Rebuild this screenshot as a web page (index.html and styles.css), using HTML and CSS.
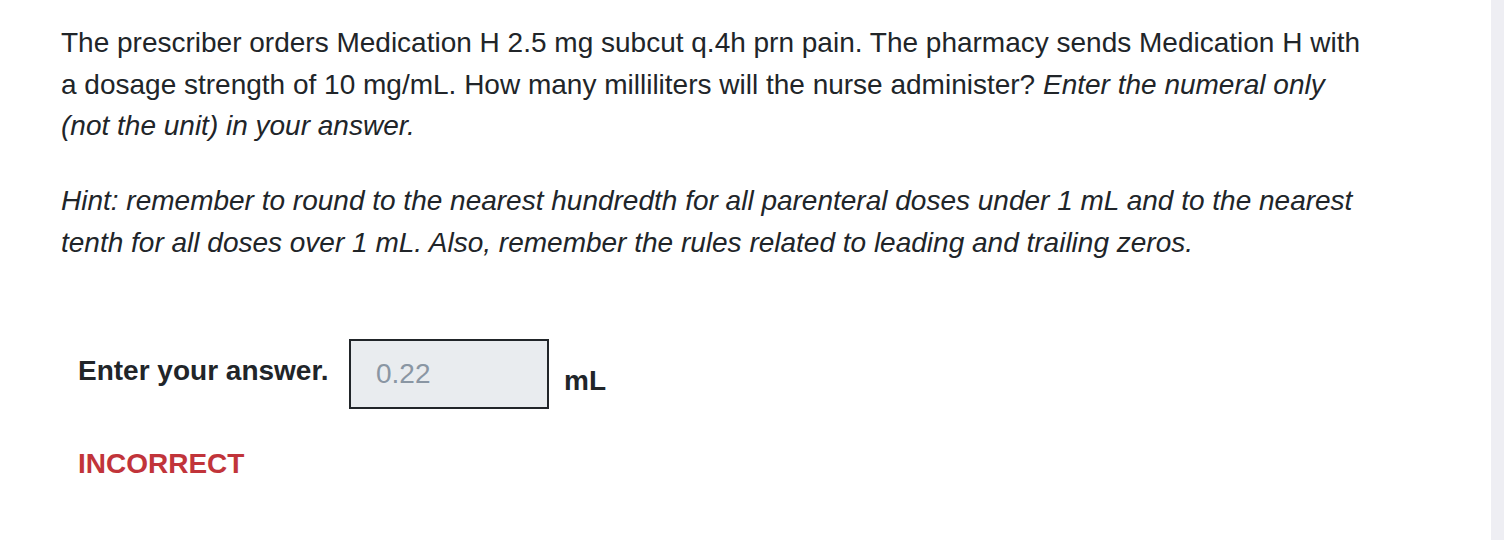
FILE: index.html
```html
<!DOCTYPE html>
<html>
<head>
<meta charset="utf-8">
<link rel="stylesheet" href="styles.css">
</head>
<body>
<div class="page">
  <main class="content">
    <p class="q">The prescriber orders Medication H 2.5 mg subcut q.4h prn pain. The pharmacy sends Medication H with a dosage strength of 10 mg/mL. How many milliliters will the nurse administer? <em>Enter the numeral only (not the unit) in your answer.</em></p>
    <p class="q hint"><em>Hint: remember to round to the nearest hundredth for all parenteral doses under 1 mL and to the nearest tenth for all doses over 1 mL. Also, remember the rules related to leading and trailing zeros.</em></p>
    <div class="answer">
      <label class="label">Enter your answer.</label>
      <div class="box">0.22</div>
      <span class="unit">mL</span>
    </div>
    <div class="result">INCORRECT</div>
  </main>
  <div class="scroll"></div>
</div>
</body>
</html>
```
FILE: styles.css
```css
html, body { margin: 0; padding: 0; background: #fff; }
.page { display: flex; height: 540px; font-family: "Liberation Sans", Arial, sans-serif; color: #212529; }
.content { flex: 1; padding: 22px 0 0 61px; }
.scroll { width: 13px; background: #eeeef3; }
.q { margin: 0 0 33.5px 0; font-size: 28px; line-height: 41.5px; width: 1310px; }
.hint { margin-bottom: 0; }
.answer { display: flex; align-items: flex-start; margin: 76px 0 0 17px; }
.label { font-weight: bold; font-size: 28px; line-height: 34px; margin-top: 15px; width: 271px; }
.box { width: 171px; height: 66px; border: 2px solid #212529; background: #e9ecef; color: #8a96a3; font-size: 28px; line-height: 66px; padding-left: 25px; }
.unit { font-weight: bold; font-size: 28px; line-height: 34px; margin: 25px 0 0 15px; }
.result { margin: 38px 0 0 17px; font-weight: bold; font-size: 28px; line-height: 34px; color: #c1343a; }
```
